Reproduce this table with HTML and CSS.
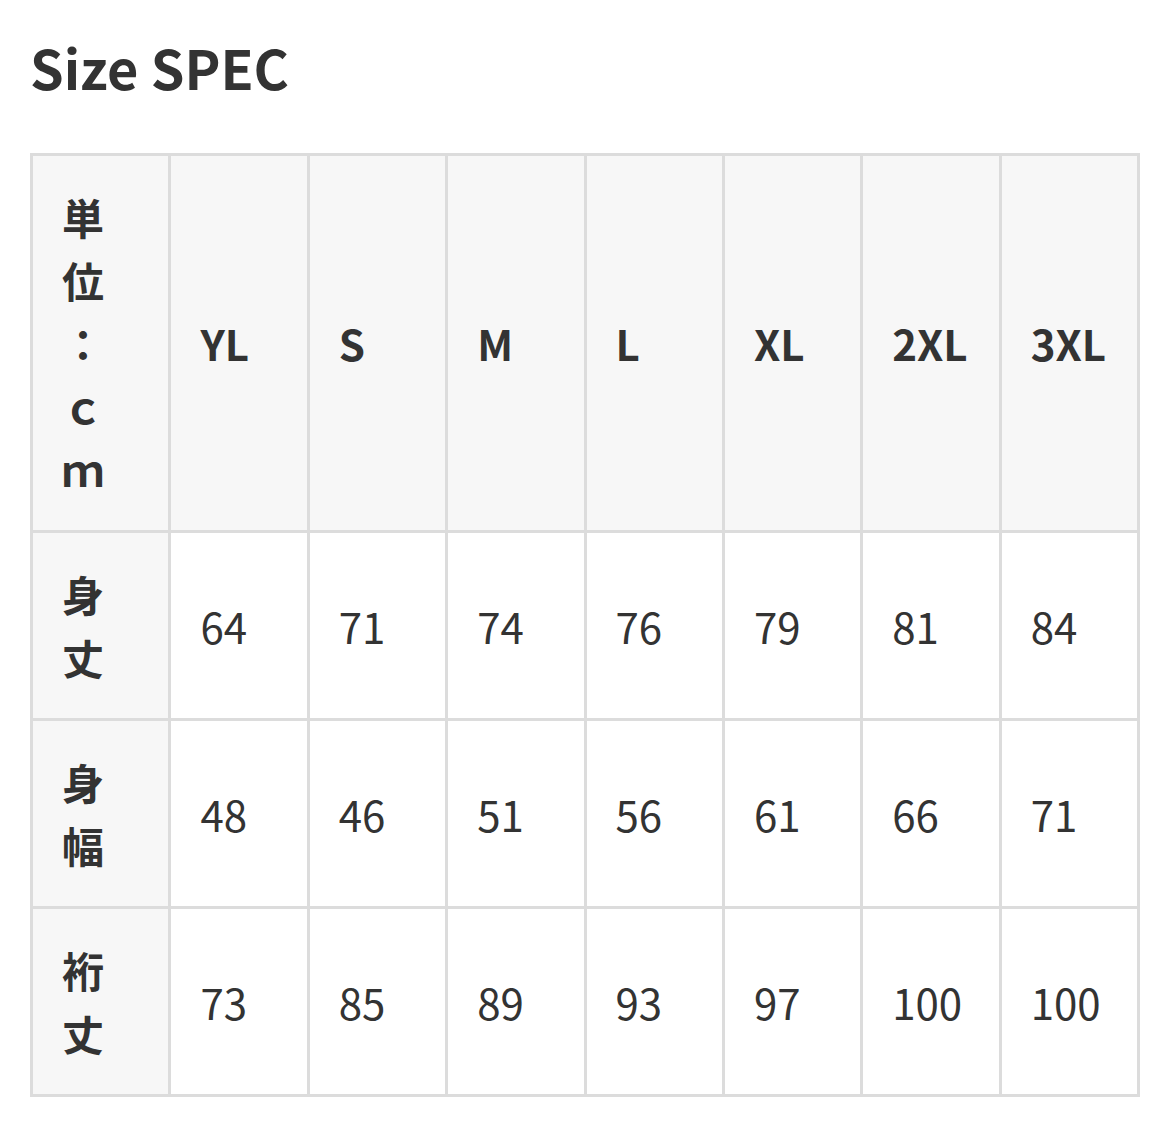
FILE: index.html
```html
<!DOCTYPE html>
<html lang="ja">
<head>
<meta charset="utf-8">
<title>Size SPEC</title>
<link rel="stylesheet" href="styles.css">
</head>
<body>
<div class="page">
  <h2 class="title">Size SPEC</h2>
  <table class="spec">
    <thead>
      <tr>
        <th class="unit">単位：ｃｍ</th>
        <th>YL</th>
        <th>S</th>
        <th>M</th>
        <th>L</th>
        <th>XL</th>
        <th>2XL</th>
        <th>3XL</th>
      </tr>
    </thead>
    <tbody>
      <tr>
        <th>身丈</th>
        <td>64</td><td>71</td><td>74</td><td>76</td><td>79</td><td>81</td><td>84</td>
      </tr>
      <tr>
        <th>身幅</th>
        <td>48</td><td>46</td><td>51</td><td>56</td><td>61</td><td>66</td><td>71</td>
      </tr>
      <tr>
        <th>裄丈</th>
        <td>73</td><td>85</td><td>89</td><td>93</td><td>97</td><td>100</td><td>100</td>
      </tr>
    </tbody>
  </table>
</div>
</body>
</html>
```
FILE: styles.css
```css
html, body {
  margin: 0;
  padding: 0;
  background: #ffffff;
}
.page {
  padding: 0 30px;
  font-family: "Noto Sans CJK JP", "Noto Sans", sans-serif;
  color: #333333;
}
.title {
  margin: 0;
  padding-top: 35px;
  font-size: 54px;
  line-height: 1.2;
  font-weight: 700;
  height: 153px;
  box-sizing: border-box;
}
.spec {
  border-collapse: collapse;
  table-layout: fixed;
  width: 1110px;
  border: 3px solid #dcdcdc;
  font-size: 42px;
  line-height: 1.5;
}
.spec th,
.spec td {
  border: 3px solid #dcdcdc;
  padding: 29px 29px 30px;
  text-align: left;
  vertical-align: middle;
}
.spec th {
  background: #f7f7f7;
  font-weight: 700;
}
.spec .unit {
  line-break: anywhere;
}
.spec td {
  background: #ffffff;
  font-weight: 400;
}
```
